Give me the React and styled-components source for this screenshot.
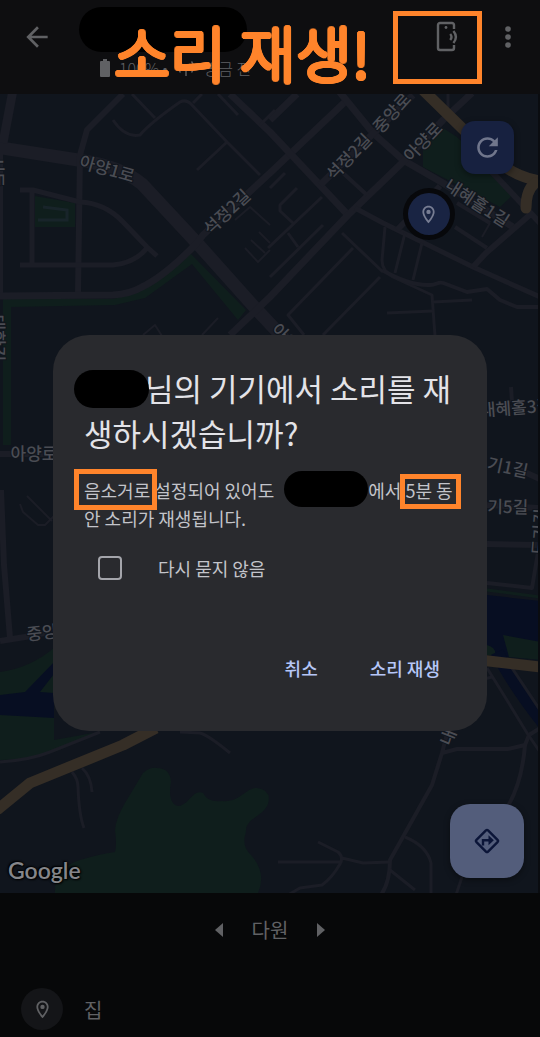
import React from 'react';
import styled, { createGlobalStyle, css } from 'styled-components';

const colors = {
  bar: '#0e0e10',
  sheet: '#070809',
  map: '#10151d',
  road: '#1b1d26',
  park: '#0f1e1c',
  water: '#070e22',
  highway: '#352e26',
  mapLabel: '#4a4c53',
  dim: '#606164',
  dialog: '#292a2e',
  title: '#e3e3e8',
  text: '#c3c4ca',
  action: '#b5c6f8',
  marker: '#ff842b',
};

const GlobalStyle = createGlobalStyle`
  * {
    box-sizing: border-box;
  }
  body {
    margin: 0;
    background: ${colors.sheet};
    font-family: "Noto Sans CJK KR", sans-serif;
  }
  button {
    padding: 0;
    border: 0;
    background: none;
    color: inherit;
    font: inherit;
    cursor: pointer;
  }
`

const Page = styled.div`
  display: flex;
  flex-direction: column;
  min-height: 100vh;
  color: ${colors.dim};
`

const TopBar = styled.header`
  position: relative;
  display: flex;
  align-items: flex-start;
  height: 94px;
  padding: 0 15px 0 20px;
  background: ${colors.bar};
`

const IconButton = styled.button`
  position: relative;
  display: flex;
  align-items: center;
  justify-content: center;
  width: ${props => props.$wide ? '88px' : '34px'};
  height: 74px;
`

const Device = styled.div`
  flex: 1;
  padding: 7px 0 0 25px;
`

const Redacted = styled.span`
  display: inline-block;
  position: relative;
  z-index: 1;
  border-radius: 24px;
  background: #000;
  ${props => props.$kind === 'device' && css`
    display: block;
    width: 168px;
    height: 45px;
  `}
  ${props => props.$kind === 'title' && css`
    width: 75px;
    height: 38px;
    margin: -13px -4px -7px -10px;
    vertical-align: middle;
  `}
  ${props => props.$kind === 'body' && css`
    width: 84px;
    height: 36px;
    margin: -14px 0 -6px 6px;
    vertical-align: middle;
  `}
`

const Status = styled.div`
  display: flex;
  align-items: center;
  gap: 9px;
  height: 32px;
  padding-left: 21px;
  font-size: 16px;
  font-weight: 300;
  line-height: 32px;
  white-space: nowrap;
`

// thin glyphs thickened by shadows all round, so the strokes get round ends
const Caption = styled.strong`
  position: absolute;
  left: 114px;
  top: 8px;
  z-index: 3;
  color: ${colors.marker};
  font-size: 61px;
  font-weight: 300;
  line-height: 88px;
  white-space: nowrap;
  text-shadow:
    2px 0 ${colors.marker}, -2px 0 ${colors.marker},
    0 2px ${colors.marker}, 0 -2px ${colors.marker},
    1px 2px ${colors.marker}, -1px 2px ${colors.marker},
    1px -2px ${colors.marker}, -1px -2px ${colors.marker},
    2px 1px ${colors.marker}, -2px 1px ${colors.marker},
    2px -1px ${colors.marker}, -2px -1px ${colors.marker};
`

const Frame = styled.span`
  position: absolute;
  inset: 11px 9px -10px -10px;
  border: 5px solid ${colors.marker};
`

const MapArea = styled.main`
  position: relative;
  flex: 1;
  min-height: 480px;
  overflow: hidden;
  border-right: 2px solid #0a0c10;
  background: ${colors.map};
`

const MapCanvas = styled.svg`
  position: absolute;
  inset: 0;
  width: 100%;
  height: 100%;
`

const Fab = styled.button`
  position: absolute;
  display: flex;
  align-items: center;
  justify-content: center;
  box-shadow: 0 2px 6px rgba(0,0,0,.4);
  ${props => props.$large ? css`
    right: 14px;
    bottom: 15px;
    width: 74px;
    height: 74px;
    border-radius: 20px;
    background: #535d7b;
    color: #0b1538;
  ` : css`
    right: 24px;
    top: 27px;
    width: 53px;
    height: 53px;
    border-radius: 14px;
    background: #172140;
    color: #70768c;
  `}
`

const Google = styled.span`
  position: absolute;
  left: 8px;
  bottom: 8px;
  color: #85868a;
  font-family: Lato, sans-serif;
  font-size: 23px;
  font-weight: 600;
  line-height: 30px;
  text-shadow: 0 0 2px #000, 1px 1px 2px #000, -1px -1px 2px #000;
`

const Sheet = styled.footer`
  height: 144px;
  overflow: hidden;
  background: ${colors.sheet};
  font-size: 20px;
`

const Pager = styled.div`
  display: flex;
  align-items: center;
  justify-content: center;
  gap: 18px;
  height: 74px;
  line-height: 74px;
`

const PagerButton = styled.button`
  display: flex;
  align-items: center;
  justify-content: center;
  width: 30px;
  height: 40px;
`

const Place = styled.div`
  display: flex;
  align-items: center;
  gap: 21px;
  height: 84px;
  padding-left: 21px;
`

const PlaceIcon = styled.span`
  display: flex;
  align-items: center;
  justify-content: center;
  width: 42px;
  height: 42px;
  border-radius: 50%;
  background: #141518;
`

const Overlay = styled.div`
  position: fixed;
  inset: 28px 0 0;
  z-index: 2;
  display: flex;
  align-items: center;
  justify-content: center;
  padding: 0 53px;
`

const Dialog = styled.section`
  width: 100%;
  max-width: 560px;
  padding: 30px 24px 43px 31px;
  border-radius: 36px;
  background: ${colors.dialog};
  color: ${colors.text};
  word-break: break-all;
`

const Title = styled.h1`
  margin: 0 0 21px;
  color: ${colors.title};
  font-size: 31px;
  font-weight: 400;
  line-height: 45px;
`

const Message = styled.p`
  margin: 0;
  font-size: 18px;
  line-height: 28px;
`

const Highlight = styled.mark`
  position: relative;
  background: none;
  color: inherit;

  &::after {
    content: '';
    position: absolute;
    inset: ${props => props.$tall ? '-8px -7px -7px -10px' : '-3px -8px -6px -5px'};
    border: 5px solid ${colors.marker};
  }
`

const Option = styled.label`
  display: flex;
  align-items: center;
  gap: 36px;
  height: 24px;
  margin: 24px 0 68px 14px;
  font-size: 18px;
`

const Checkbox = styled.input`
  appearance: none;
  width: 24px;
  height: 24px;
  margin: 0;
  border: 2px solid #a4a5ab;
  border-radius: 4px;

  &:checked {
    background: ${colors.action};
  }
`

const Actions = styled.div`
  display: flex;
  justify-content: flex-end;
  gap: 36px;
  padding-right: 15px;
`

const TextButton = styled.button`
  && {
    height: 40px;
    padding: 0 8px;
    color: ${colors.action};
    font-size: 18px;
    font-weight: 500;
  }
`

const roads = [
  { width: 13, d: 'M-5 147L78 160Q120 166 142 184L197 243L257 310L290 345' },
  { width: 9, d: 'M13 90L3 143' },
  { width: 6, d: 'M123 94L87 130L80 155L78 293' },
  { width: 5, d: 'M20 190L33 190L80 202Q105 203 123 222L147 247L157 256M32 190V265M20 265H113Q135 263 147 248' },
  { width: 4, d: 'M1 150V295' },
  { width: 7, d: 'M0 296L113 295Q130 294 142 287Q165 276 197 243L203 235L270 173L347 100' },
  { width: 7, d: 'M230 94L270 132L348 215M270 120L297 94M338 90L373 133L403 160L443 183L513 227' },
  { width: 7, d: 'M230 335L270 297L348 215L403 162L443 120L472 93M320 185L380 127L413 95' },
  { width: 5, d: 'M355 208L383 223L422 242L473 267L540 297' },
  { width: 3, d: 'M385 227L382 260Q382 271 393 277L432 295L435 336' },
  { width: 4, d: 'M382 270Q410 286 430 285C438 285 438 280 446 284L467 292L487 289L500 300L517 307H540' },
  { width: 3, d: 'M405 233L395 273M422 243L413 280M342 233L383 272M353 248L288 315L304 335M380 277L323 335M433 302L472 300M387 313L433 311' },
  { width: 6, d: 'M473 267L486 253L532 213M490 170L540 223M440 186L397 230' },
  { width: 4, d: 'M455 227L487 248M457 203L490 223M343 173L367 195' },
  { width: 2, d: 'M490 223L482 237' },
  { width: 3, d: 'M285 173L270 188M297 188L280 205V211L293 223M322 197L268 248M323 225L270 277M288 233L298 247M448 93V108' },
  { width: 3, d: 'M132 94L155 118M113 120Q125 138 140 135Q150 123 180 102Q186 99 191 104L227 142L260 175M197 170L227 142M202 94L193 103M218 94L238 115M260 125L275 110' },
  { width: 2, d: 'M245 248L258 262L270 250M251 240L265 253M259 232L270 243M235 220L250 207L270 225M143 335L155 325L162 336M202 335L218 318' },
  { width: 6, d: 'M0 454H53M1 490L4 565L10 638M0 641L25 637L54 631' },
  { width: 2, d: 'M20 504L23 512L38 525H45L54 516M27 496L52 521' },
  { width: 3, d: 'M0 762Q30 760 50 752L100 732M72 772Q78 779 78 787Q79 815 84 828M82 768Q91 776 92 792M180 732L200 733Q208 735 230 753' },
  { width: 4, d: 'M448 730L442 753L432 785L390 860Q390 882 381 895M442 753L457 749H508L525 745L529 735L540 728M525 745Q522 782 508 806' },
  { width: 3, d: 'M318 842L338 852Q344 857 340 864Q332 878 322 885L300 888L288 895M278 862H341M342 858L363 863L390 862M405 837Q427 846 431 863V895M390 870L415 890M462 877L456 895' },
  { width: 6, d: 'M487 544L540 545M520 470L540 479M487 505L540 508' },
  { width: 4, d: 'M487 583L532 588L538 552M487 412L512 407M511 387L512 402' },
  { width: 3, d: 'M487 668L505 697L527 733L540 752M512 668L540 710M480 680L492 677' },
];

const labels = [
  { x: 107, y: 169, angle: 16, text: '아양1로' },
  { x: 227, y: 212, angle: -43, text: '석정2길' },
  { x: 349, y: 157, angle: -46, text: '석정2길' },
  { x: 392, y: 113, angle: -48, text: '중앙로' },
  { x: 423, y: 142, angle: -46, text: '아양로' },
  { x: 477, y: 203, angle: 33, text: '내혜홀1길' },
  { x: 291, y: 343, angle: 45, text: '아양로' },
  { x: 34, y: 454, angle: 0, text: '아양로' },
  { x: 50, y: 632, angle: -6, text: '중앙로' },
  { x: 516, y: 408, angle: -4, text: '내혜홀3길' },
  { x: 500, y: 466, angle: 12, text: '도기1길' },
  { x: 500, y: 507, angle: 1, text: '도기5길' },
  { x: 540, y: 532, angle: -86, text: '도기길' },
  { x: 451, y: 730, angle: -68, text: '내리' },
  { x: -4, y: 172, angle: 90, text: '서동' },
  { x: -3, y: 338, angle: 90, text: '대학길' },
];

const ArrowBack = () => (
  <svg width="32" height="32" viewBox="0 0 24 24" fill="currentColor">
    <path d="M20 11H7.83l5.59-5.59L12 4l-8 8 8 8 1.41-1.41L7.83 13H20v-2z" />
  </svg>
);

const PhoneRing = () => (
  <svg width="26" height="34" viewBox="0 0 26 34" fill="none" stroke="currentColor" strokeWidth="2.4">
    <path d="M20 9V5a2 2 0 0 0-2-2H6a2 2 0 0 0-2 2v23a2 2 0 0 0 2 2h12a2 2 0 0 0 2-2v-3" />
    <path d="M16.200 14q2.600 3 0 6M19.400 11q5 6 0 12" />
    <circle cx="12" cy="7.500" r="1.400" fill="currentColor" stroke="none" />
  </svg>
);

const More = () => (
  <svg width="8" height="24" viewBox="0 0 8 24" fill="currentColor">
    <circle cx="4" cy="4" r="2.800" />
    <circle cx="4" cy="12" r="2.800" />
    <circle cx="4" cy="20" r="2.800" />
  </svg>
);

const Battery = () => (
  <svg width="10" height="18" viewBox="0 0 10 18" fill="currentColor">
    <path d="M3 0h4v2h2a1 1 0 0 1 1 1v14a1 1 0 0 1-1 1H1a1 1 0 0 1-1-1V3a1 1 0 0 1 1-1h2z" />
  </svg>
);

const Antenna = () => (
  <svg width="18" height="16" viewBox="0 0 18 16" fill="none" stroke="currentColor" strokeWidth="1.400">
    <path d="M9 7v9M3.500 1.500Q-1 7 3.500 12.500M14.500 1.500Q19 7 14.500 12.500M6 4Q3.500 7 6 10M12 4Q14.500 7 12 10" />
    <circle cx="9" cy="6.500" r="1.600" fill="currentColor" stroke="none" />
  </svg>
);

const Pin = props => (
  <svg width="21" height="21" viewBox="0 0 24 24" fill="currentColor" {...props}>
    <path d="M12 2C8.130 2 5 5.130 5 9c0 5.250 7 13 7 13s7-7.750 7-13c0-3.870-3.130-7-7-7zM7 9c0-2.760 2.240-5 5-5s5 2.240 5 5c0 2.880-2.880 7.190-5 9.880C9.920 16.210 7 11.850 7 9z" />
    <circle cx="12" cy="9" r="2.500" />
  </svg>
);

const Refresh = () => (
  <svg width="31" height="31" viewBox="0 0 24 24" fill="currentColor">
    <path d="M17.650 6.350C16.200 4.900 14.210 4 12 4c-4.420 0-7.990 3.580-7.990 8s3.570 8 7.990 8c3.730 0 6.840-2.550 7.730-6h-2.080c-.82 2.330-3.040 4-5.650 4-3.310 0-6-2.690-6-6s2.690-6 6-6c1.660 0 3.140.690 4.220 1.780L13 11h7V4l-2.350 2.350z" />
  </svg>
);

const Directions = () => (
  <svg width="28" height="28" viewBox="-14 -14 28 28" fill="none" stroke="currentColor" strokeWidth="2.400">
    <rect x="-8.200" y="-8.200" width="16.400" height="16.400" rx="1.500" transform="rotate(45)" />
    <path d="M-4 4.500V-.8H3" />
    <path d="M1.500-5.800L6.800-.8L1.500 4.200z" fill="currentColor" stroke="none" />
  </svg>
);

const Triangle = ({ d }) => (
  <svg width="8" height="14" viewBox="0 0 8 14" fill="currentColor">
    <path d={d} />
  </svg>
);

const Map = () => (
  <MapCanvas viewBox="0 94 538 799" preserveAspectRatio="xMidYMid slice">
    <g fill={colors.park}>
      <path d="M443 128L457 137L515 193L500 207L423 167V147z" />
      <path d="M35 196L75 203V227H35z" />
      <path d="M190 253L168 273L140 291L113 299H3V445H11V307L115 305L145 298L192 264L238 320L246 310z" />
      <path d="M0 672Q30 668 54 648V740L93 733Q60 752 40 756Q20 760 0 760z" />
      <path d="M55 893Q54 868 80 860Q100 854 115 852Q117 845 115 830Q116 818 125 803L143 773Q150 767 157 768Q170 768 171 782C168 797 172 807 180 806C190 803 193 789 203 793Q208 803 222 801C240 803 245 788 257 788Q272 790 268 804C263 817 245 818 246 832Q241 846 251 855Q267 873 258 893z" />
    </g>
    <path d="M43 207L67 210V220H38" fill="none" stroke="#18242a" strokeWidth="3" />
    <path d="M0 695L25 692L54 662V718L0 715z" fill={colors.water} />
    <path d="M40 692L54 674V693z" fill={colors.park} />
    <path d="M487 595L540 601V660L487 655z" fill={colors.water} />
    <path d="M487 590L540 597" stroke={colors.park} strokeWidth="3" />
    <path d="M503 635L540 642V660L509 657zM487 645Q497 648 495 656L487 655z" fill={colors.park} />
    <path d="M497 652Q510 680 545 725" fill="none" stroke={colors.water} strokeWidth="13" />
    <g fill="none" stroke={colors.road} strokeLinejoin="round">
      {roads.map(road => <path key={road.d} d={road.d} strokeWidth={road.width} />)}
    </g>
    <g fill="none" stroke={colors.highway} strokeWidth="11" strokeLinejoin="round">
      <path d="M423 90L467 133L495 158Q512 176 540 181" />
      <path d="M535 183Q526 190 526 208" strokeLinecap="round" />
      <path d="M-3 810L30 783L123 745L156 728" />
      <path d="M480 660L540 667" />
    </g>
    <g fill={colors.mapLabel} stroke={colors.map} strokeWidth="2" paintOrder="stroke" fontSize="17" fontWeight="500" textAnchor="middle">
      {labels.map(label => (
        <text key={`${label.x}-${label.y}`} transform={`translate(${label.x} ${label.y}) rotate(${label.angle})`} dy="6">
          {label.text}
        </text>
      ))}
    </g>
    <circle cx="429" cy="214" r="26" fill="#07080b" />
    <circle cx="429" cy="214" r="21" fill="#192443" />
    <Pin x="418" y="204" color="#777d93" />
  </MapCanvas>
);

const App = () => (
  <>
    <GlobalStyle />
    <Page>
      <TopBar>
        <IconButton type="button" aria-label="뒤로">
          <ArrowBack />
        </IconButton>
        <Device>
          <Redacted $kind="device" />
          <Status>
            <Battery />
            <span>100% •</span>
            <Antenna />
            <span>방금 전</span>
          </Status>
        </Device>
        <IconButton type="button" aria-label="소리 재생" $wide>
          <PhoneRing />
          <Frame />
        </IconButton>
        <IconButton type="button" aria-label="더보기">
          <More />
        </IconButton>
        <Caption>소리 재생!</Caption>
      </TopBar>

      <MapArea>
        <Map />
        <Fab type="button" aria-label="새로고침">
          <Refresh />
        </Fab>
        <Fab type="button" aria-label="길찾기" $large>
          <Directions />
        </Fab>
        <Google>Google</Google>
      </MapArea>

      <Sheet>
        <Pager>
          <PagerButton type="button" aria-label="이전">
            <Triangle d="M8 0v14L0 7z" />
          </PagerButton>
          <span>다원</span>
          <PagerButton type="button" aria-label="다음">
            <Triangle d="M0 0v14l8-7z" />
          </PagerButton>
        </Pager>
        <Place>
          <PlaceIcon>
            <Pin />
          </PlaceIcon>
          <span>집</span>
        </Place>
      </Sheet>
    </Page>

    <Overlay>
      <Dialog role="dialog" aria-labelledby="dialog-title">
        <Title id="dialog-title">
          <Redacted $kind="title" />님의 기기에서 소리를 재생하시겠습니까?
        </Title>
        <Message>
          <Highlight $tall>음소거로</Highlight> 설정되어 있어도 <Redacted $kind="body" />에서 <Highlight>5분 동</Highlight>안 소리가 재생됩니다.
        </Message>
        <Option htmlFor="skip">
          <Checkbox id="skip" type="checkbox" />
          다시 묻지 않음
        </Option>
        <Actions>
          <TextButton type="button">취소</TextButton>
          <TextButton type="button">소리 재생</TextButton>
        </Actions>
      </Dialog>
    </Overlay>
  </>
);

export default App;
